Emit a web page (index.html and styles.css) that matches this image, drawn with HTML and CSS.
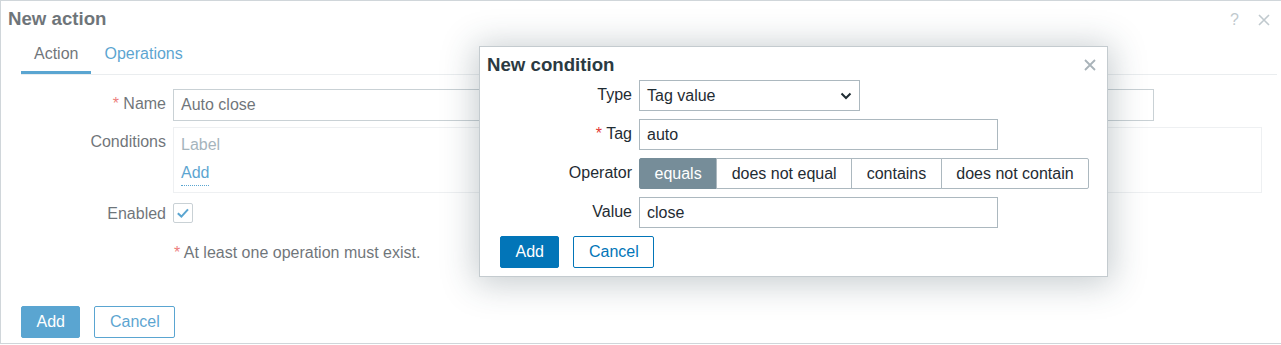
FILE: index.html
```html
<!DOCTYPE html>
<html>
<head>
<meta charset="utf-8">
<link rel="stylesheet" href="styles.css">
</head>
<body>
<div class="page">
  <div class="dialog">
    <div class="dlg-head">
      <h4 class="dlg-title">New action</h4>
      <div class="head-tools">
        <span class="help">?</span>
        <svg class="head-close" width="12" height="12" viewBox="0 0 12 12"><path d="M1 1L11 11M11 1L1 11" stroke="#9fadb4" stroke-width="1.6" fill="none"/></svg>
      </div>
    </div>
    <div class="tabs">
      <span class="tab active">Action</span>
      <span class="tab">Operations</span>
    </div>
    <div class="form">
      <div class="lbl"><span class="req">*</span> Name</div>
      <div class="fld"><div class="text name-input">Auto close</div></div>

      <div class="lbl">Conditions</div>
      <div class="fld">
        <div class="cond-box">
          <div class="cond-label">Label</div>
          <div class="cond-add"><span class="link-dotted">Add</span></div>
        </div>
      </div>

      <div class="lbl">Enabled</div>
      <div class="fld">
        <div class="checkbox"><svg width="18" height="18" viewBox="0 0 18 18"><path d="M3.8 9.2L7.4 12.6L14 5.4" stroke="#0275b8" stroke-width="2" fill="none"/></svg></div>
      </div>

      <div class="fld msg"><span class="req">*</span> At least one operation must exist.</div>
    </div>
    <div class="foot">
      <button class="btn primary">Add</button>
      <button class="btn alt">Cancel</button>
    </div>
  </div>

  <div class="dim"></div>

  <div class="modal">
    <div class="modal-head">
      <h4 class="modal-title">New condition</h4>
      <svg class="modal-close" width="12" height="12" viewBox="0 0 12 12"><path d="M1 1L11 11M11 1L1 11" stroke="#a9b3b9" stroke-width="1.8" fill="none"/></svg>
    </div>
    <div class="mform">
      <div class="mlbl">Type</div>
      <div class="mfld">
        <div class="text select">Tag value<svg class="chev" width="12" height="8" viewBox="0 0 12 8"><path d="M1.5 1.5L6 6L10.5 1.5" stroke="#1f2c33" stroke-width="2" fill="none"/></svg></div>
      </div>

      <div class="mlbl"><span class="req">*</span> Tag</div>
      <div class="mfld"><div class="text tag-input">auto</div></div>

      <div class="mlbl">Operator</div>
      <div class="mfld">
        <div class="seg">
          <span class="seg-item on">equals</span>
          <span class="seg-item">does not equal</span>
          <span class="seg-item">contains</span>
          <span class="seg-item">does not contain</span>
        </div>
      </div>

      <div class="mlbl">Value</div>
      <div class="mfld"><div class="text tag-input">close</div></div>
    </div>
    <div class="mfoot">
      <button class="btn primary">Add</button>
      <button class="btn alt">Cancel</button>
    </div>
  </div>
</div>
</body>
</html>
```

FILE: styles.css
```css
* { box-sizing: border-box; }
html, body { margin: 0; padding: 0; background: #fff; }
body {
  font-family: "Liberation Sans", Arial, sans-serif;
  font-size: 16px;
  color: #1f2c33;
}
.page {
  position: relative;
  width: 1281px;
  height: 345px;
  overflow: hidden;
}
.dialog {
  display: flex;
  flex-direction: column;
  width: 1281px;
  height: 344px;
  border: 1px solid #b7c1c6;
  border-right: none;
  background: #fff;
}
.dlg-head {
  display: flex;
  align-items: center;
  height: 36px;
  padding: 0 11px 0 7px;
}
.dlg-title {
  margin: 0;
  flex: 1;
  font-size: 18.67px;
  font-weight: bold;
  line-height: 36px;
  color: #1f2c33;
}
.head-tools {
  display: flex;
  align-items: center;
  gap: 19px;
  padding-top: 1px;
}
.help {
  color: #9fadb4;
  font-size: 16px;
  line-height: 18px;
}
.head-close { display: block; }
.tabs {
  display: flex;
  margin: 0 4px 0 20px;
  border-bottom: 1px solid #dfe4e7;
}
.tab {
  padding: 5px 13px 5px;
  line-height: 24px;
  border-bottom: 3px solid transparent;
  color: #0275b8;
}
.tab.active {
  color: #1f2c33;
  border-bottom-color: #0275b8;
}
.form {
  display: grid;
  grid-template-columns: 145px auto;
  column-gap: 7px;
  row-gap: 6px;
  padding: 14px 0 0 20px;
  justify-content: start;
}
.lbl {
  text-align: right;
  padding-top: 6px;
  line-height: 18px;
  white-space: nowrap;
}
.req { color: #e33734; }
.text {
  height: 32px;
  border: 1px solid #acb8bf;
  padding: 0 7px;
  line-height: 30px;
  background: #fff;
  white-space: nowrap;
}
.name-input { width: 981px; }
.cond-box {
  width: 1089px;
  height: 66px;
  border: 1px solid #e5e9eb;
  padding: 5px 7px 7px;
}
.cond-label {
  line-height: 24px;
  color: #768d99;
}
.cond-add { margin-top: 4px; }
.link-dotted {
  display: inline-block;
  line-height: 24px;
  color: #0275b8;
  border-bottom: 1px dotted #0275b8;
}
.checkbox {
  width: 20px;
  height: 20px;
  margin-top: 4px;
  border: 1px solid #acb8bf;
  border-radius: 2px;
  display: flex;
  align-items: center;
  justify-content: center;
}
.checkbox svg { display: block; }
.msg {
  grid-column: 2;
  padding: 15px 0 0 1px;
  line-height: 18px;
}
.foot {
  margin-top: auto;
  display: flex;
  gap: 14px;
  padding: 0 0 5px 20px;
}
.btn {
  height: 32px;
  padding: 0 14.5px;
  font-family: "Liberation Sans", Arial, sans-serif;
  font-size: 16px;
  border-radius: 2px;
  border: 1px solid #0275b8;
  cursor: pointer;
}
.btn.primary { background: #0275b8; color: #fff; }
.btn.alt { background: #fff; color: #0275b8; }

.dim {
  position: absolute;
  inset: 0;
  background: rgba(255, 255, 255, 0.35);
}

.modal {
  position: absolute;
  left: 479px;
  top: 46px;
  width: 629px;
  height: 231px;
  border: 1px solid #c4cbcf;
  background: #fff;
  box-shadow: 0 3px 32px 4px rgba(40, 60, 72, 0.26);
  display: flex;
  flex-direction: column;
}
.modal-head {
  display: flex;
  align-items: center;
  padding: 7px 11px 0 7px;
  height: 29px;
}
.modal-title {
  margin: 0;
  flex: 1;
  font-size: 18.67px;
  font-weight: bold;
  line-height: 22px;
  color: #2b3a42;
}
.modal-close { display: block; }
.mform {
  display: grid;
  grid-template-columns: 152px auto;
  column-gap: 7px;
  row-gap: 8px;
  margin-top: 4px;
  justify-content: start;
}
.mlbl {
  text-align: right;
  padding-top: 6px;
  line-height: 18px;
  white-space: nowrap;
}
.mfld .text { height: 31px; line-height: 29px; }
.select {
  width: 221px;
  display: flex;
  align-items: center;
  justify-content: space-between;
  padding-right: 7px;
}
.chev { display: block; }
.tag-input { width: 359px; }
.seg {
  display: inline-flex;
  height: 31px;
}
.seg-item {
  border: 1px solid #acb8bf;
  padding: 0 14.5px;
  line-height: 29px;
  white-space: nowrap;
  margin-left: -1px;
  background: #fff;
}
.seg-item:first-child { margin-left: 0; border-radius: 2px 0 0 2px; }
.seg-item:last-child { border-radius: 0 2px 2px 0; }
.seg-item.on {
  background: #768d99;
  border-color: #768d99;
  color: #fff;
}
.mfoot {
  display: flex;
  gap: 14px;
  padding: 8px 0 0 20px;
}
```
